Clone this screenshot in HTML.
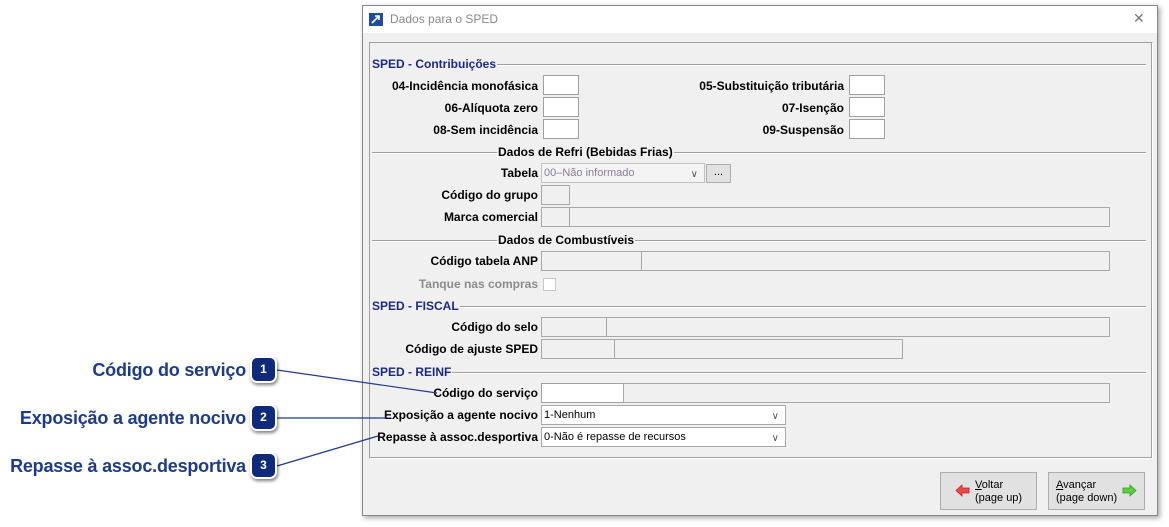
<!DOCTYPE html>
<html><head><meta charset="utf-8"><style>
*{margin:0;padding:0;box-sizing:border-box}
body{width:1169px;height:527px;background:#fff;position:relative;overflow:hidden;font-family:"Liberation Sans",Tahoma,sans-serif}
.a{position:absolute}
.dlg{left:362px;top:5px;width:796px;height:511px;background:#f0f0f0;border:1px solid #888;box-shadow:2px 2px 5px rgba(0,0,0,.35)}
.tb{left:0;top:0;width:794px;height:27px;background:#fff}
.lb{position:absolute;font-size:12px;font-weight:bold;color:#000;text-align:right;white-space:nowrap;line-height:14px}
.sec{position:absolute;font-size:12px;font-weight:bold;color:#1a2a8a;line-height:14px;background:#f0f0f0;padding-right:1px}
.hl{position:absolute;height:1px;background:#a0a0a0;border-bottom:1px solid #fff;box-sizing:content-box}
.bx{position:absolute;border:1px solid #a8a8a8;background:#f0f0f0;height:20px}
.w{background:#fff;border-color:#a0a0a0}
.cb{position:absolute;height:20px;border:1px solid #a8a8a8;background:#fff;font-size:11px;line-height:18px;padding-left:2px;color:#000}
.cb .ch{position:absolute;right:6px;top:2px;font-size:10px;color:#555}
.co{position:absolute;font-size:18px;font-weight:bold;color:#1e3a8f;white-space:nowrap;line-height:20px;letter-spacing:-0.2px}
.num{position:absolute;width:27px;height:27px;border-radius:7px;background:#0f2a7a;border:2px solid #fff;box-shadow:1px 2px 3px rgba(0,0,0,.5);color:#fff;font-size:12px;font-weight:bold;text-align:center;line-height:23px;z-index:3}
.btn{position:absolute;width:97px;height:38px;background:#e1e1e1;border:1px solid #adadad;font-size:11px;line-height:13px;color:#000}
</style></head><body>
<div class="co" style="right:923px;top:360px">Código do serviço</div>
<div class="co" style="right:923px;top:408px">Exposição a agente nocivo</div>
<div class="co" style="right:923px;top:456px">Repasse à assoc.desportiva</div>

<div class="a dlg">
<div class="a tb">
<svg class="a" style="left:6px;top:7px" width="14" height="13"><rect width="14" height="13" fill="#1e4f9a"/><path d="M3 10 L10 3 M6 3 H10 V7" stroke="#fff" stroke-width="1.6" fill="none"/></svg>
<div class="a" style="left:27px;top:6px;font-size:12px;color:#888">Dados para o SPED</div>
<div class="a" style="left:770px;top:4px;font-size:14px;color:#777">✕</div>
</div>
<div class="a" style="left:6px;top:36px;width:784px;height:417px;border:1px solid #a0a0a0;border-right-color:#fff;border-bottom-color:#fff;box-shadow:inset -1px -1px 0 #a0a0a0"></div>
</div>

<div class="hl" style="left:372px;top:64px;width:774px"></div>
<div class="sec" style="left:372px;top:57px">SPED - Contribuições</div>
<div class="lb" style="right:631px;top:79px">04-Incidência monofásica</div>
<div class="bx w" style="left:543px;top:75px;width:36px"></div>
<div class="lb" style="right:325px;top:79px">05-Substituição tributária</div>
<div class="bx w" style="left:849px;top:75px;width:36px"></div>
<div class="lb" style="right:631px;top:101px">06-Alíquota zero</div>
<div class="bx w" style="left:543px;top:97px;width:36px"></div>
<div class="lb" style="right:325px;top:101px">07-Isenção</div>
<div class="bx w" style="left:849px;top:97px;width:36px"></div>
<div class="lb" style="right:631px;top:123px">08-Sem incidência</div>
<div class="bx w" style="left:543px;top:119px;width:36px"></div>
<div class="lb" style="right:325px;top:123px">09-Suspensão</div>
<div class="bx w" style="left:849px;top:119px;width:36px"></div>

<div class="hl" style="left:372px;top:152px;width:774px"></div>
<div class="sec" style="left:497px;top:145px;color:#000;padding-left:1px">Dados de Refri (Bebidas Frias)</div>
<div class="lb" style="right:631px;top:166px">Tabela</div>
<div class="cb" style="left:541px;top:163px;width:164px;color:#8a7a9a;background:#f4f4f4;border-color:#c0c0c0">00–Não informado<span class="ch">∨</span></div>
<div class="a" style="left:706px;top:164px;width:25px;height:19px;background:#e1e1e1;border:1px solid #adadad;font-size:11px;text-align:center;line-height:14px">...</div>
<div class="lb" style="right:631px;top:188px">Código do grupo</div>
<div class="bx" style="left:541px;top:185px;width:29px"></div>
<div class="lb" style="right:631px;top:210px">Marca comercial</div>
<div class="bx" style="left:541px;top:207px;width:29px"></div>
<div class="bx" style="left:569px;top:207px;width:541px"></div>

<div class="hl" style="left:372px;top:240px;width:774px"></div>
<div class="sec" style="left:497px;top:233px;color:#000;padding-left:1px">Dados de Combustíveis</div>
<div class="lb" style="right:631px;top:254px">Código tabela ANP</div>
<div class="bx" style="left:541px;top:251px;width:101px"></div>
<div class="bx" style="left:641px;top:251px;width:469px"></div>
<div class="lb" style="right:631px;top:277px;color:#8c8c8c">Tanque nas compras</div>
<div class="a" style="left:543px;top:278px;width:13px;height:13px;background:#fff;border:1px solid #c8c8c8"></div>

<div class="hl" style="left:372px;top:306px;width:774px"></div>
<div class="sec" style="left:372px;top:299px">SPED - FISCAL</div>
<div class="lb" style="right:631px;top:320px">Código do selo</div>
<div class="bx" style="left:541px;top:317px;width:66px"></div>
<div class="bx" style="left:606px;top:317px;width:504px"></div>
<div class="lb" style="right:631px;top:342px">Código de ajuste SPED</div>
<div class="bx" style="left:541px;top:339px;width:74px"></div>
<div class="bx" style="left:614px;top:339px;width:289px"></div>

<div class="hl" style="left:372px;top:372px;width:774px"></div>
<div class="sec" style="left:372px;top:365px">SPED - REINF</div>
<div class="lb" style="right:631px;top:386px">Código do serviço</div>
<div class="bx w" style="left:541px;top:383px;width:83px"></div>
<div class="bx" style="left:623px;top:383px;width:487px"></div>
<div class="lb" style="right:631px;top:408px">Exposição a agente nocivo</div>
<div class="cb" style="left:541px;top:405px;width:245px">1-Nenhum<span class="ch">∨</span></div>
<div class="lb" style="right:631px;top:430px">Repasse à assoc.desportiva</div>
<div class="cb" style="left:541px;top:427px;width:245px">0-Não é repasse de recursos<span class="ch">∨</span></div>

<div class="btn" style="left:940px;top:472px">
<svg class="a" style="left:14px;top:11px" width="15" height="13"><path d="M1 6.5 L7 1 V4 H14 V9 H7 V12 Z" fill="#f04848" stroke="#c02020" stroke-width=".8"/></svg>
<div class="a" style="left:34px;top:6px"><u>V</u>oltar<br>(page up)</div></div>
<div class="btn" style="left:1048px;top:472px">
<div class="a" style="left:7px;top:6px"><u>A</u>vançar<br>(page down)</div>
<svg class="a" style="left:73px;top:11px" width="15" height="13"><path d="M14 6.5 L8 1 V4 H1 V9 H8 V12 Z" fill="#5ccf3a" stroke="#2f9a20" stroke-width=".8"/></svg></div>

<svg class="a" style="left:0;top:0;z-index:2" width="1169" height="527">
<line x1="277" y1="370" x2="437" y2="393" stroke="#1e3a8f" stroke-width="1.2"/>
<line x1="277" y1="418" x2="386" y2="418" stroke="#1e3a8f" stroke-width="1.2"/>
<line x1="277" y1="466" x2="378" y2="436" stroke="#1e3a8f" stroke-width="1.2"/>
</svg>
<div class="num" style="left:250px;top:356px">1</div>
<div class="num" style="left:250px;top:404px">2</div>
<div class="num" style="left:250px;top:452px">3</div>
</body></html>
